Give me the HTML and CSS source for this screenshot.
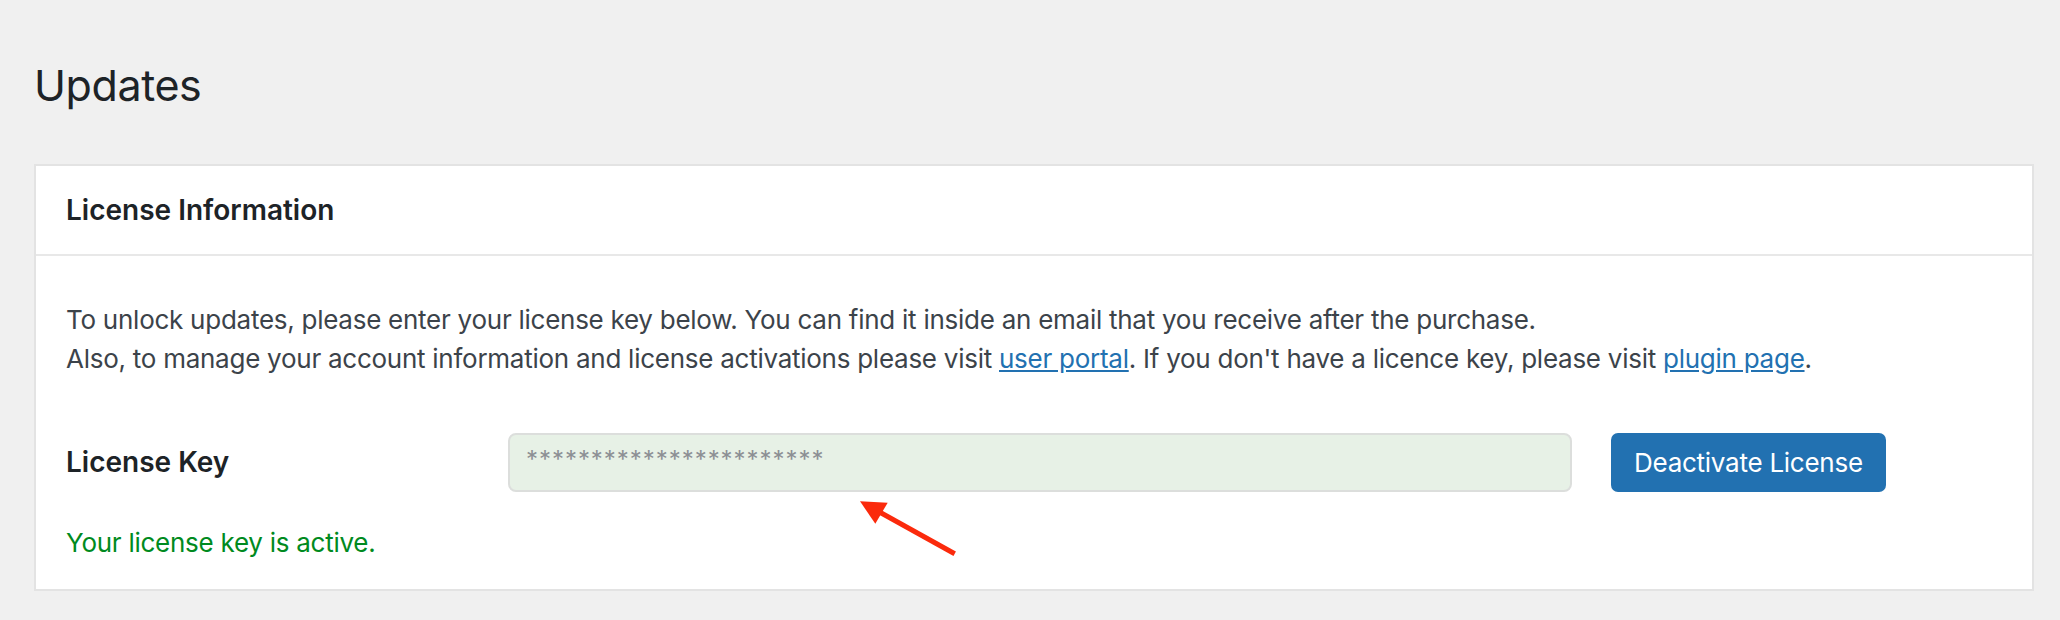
FILE: index.html
```html
<!DOCTYPE html>
<html lang="en">
<head>
  <meta charset="UTF-8">
  <meta name="viewport" content="width=device-width, initial-scale=1.0">
  <title>Updates</title>
  <link rel="stylesheet" href="styles.css">
</head>
<body>
<div class="wrap">
  <h1>Updates</h1>

  <div class="card">
    <div class="card-head">License Information</div>
    <div class="card-body">
      <p class="intro">
        To unlock updates, please enter your license key below. You can find it inside an email that you receive after the purchase.<br>
        Also, to manage your account information and license activations please visit <a href="#">user portal</a>. If you don't have a licence key, please visit <a href="#">plugin page</a>.
      </p>

      <div class="key-row">
        <label class="key-label" for="licenseKey">License Key</label>
        <input class="key-input" id="licenseKey" type="text" value="***********************" readonly>
        <button class="btn" type="button">Deactivate License</button>
      </div>

      <p class="status">Your license key is active.</p>
    </div>

    <!-- callout arrow pointing at the key field -->
    <svg class="arrow" width="102" height="60" viewBox="0 0 102 60">
      <line x1="97.7" y1="55.7" x2="22" y2="13.8" stroke="#fb2a0c" stroke-width="5"/>
      <polygon points="3,3.3 30.7,4.7 18.3,25.7" fill="#fb2a0c"/>
    </svg>
  </div>
</div>
</body>
</html>
```

FILE: styles.css
```css
body {
  margin: 0;
  background-color: #f0f0f0;
  font-family: Inter, "Noto Sans", Arial, sans-serif;
  color: #3c434a;
}
.wrap {
  padding: 0 26px 0 34px;
}
h1 {
  margin: 57px 0 50px;
  font-size: 43px;
  font-weight: 400;
  line-height: 57px;
  letter-spacing: -0.4px;
  color: #1d2327;
}
.card {
  position: relative;
  background-color: #fff;
  border: 2px solid #e3e3e3;
}
.card-head {
  padding: 24px 30px;
  font-size: 28px;
  font-weight: 600;
  line-height: 40px;
  color: #1d2327;
  border-bottom: 2px solid #e8e8e8;
}
.card-body {
  padding: 44px 30px 27px;
  font-size: 26px;
  line-height: 39px;
  letter-spacing: -0.26px;
}
.intro {
  margin: 0 0 55px;
}
.intro a {
  color: #2271b1;
}
.key-row {
  display: flex;
  align-items: center;
}
.key-label {
  width: 442px;
  font-size: 28px;
  font-weight: 600;
  letter-spacing: 0;
  color: #1d2327;
}
.key-input {
  box-sizing: border-box;
  width: 1064px;
  height: 59px;
  padding: 0 16px 6px;
  border: 2px solid #dcdedc;
  border-radius: 8px;
  background-color: #e7f1e6;
  color: #8c8f94;
  font-family: inherit;
  font-size: 24px;
  letter-spacing: 0.95px;
}
.btn {
  height: 59px;
  margin-left: 39px;
  padding: 0 23px;
  border: 0;
  border-radius: 7px;
  background-color: #2271b1;
  color: #fff;
  font-family: inherit;
  font-size: 26px;
  letter-spacing: -0.26px;
}
.status {
  margin: 31px 0 0;
  color: #008a20;
}
.arrow {
  position: absolute;
  left: 821px;
  top: 332px;
}
```
